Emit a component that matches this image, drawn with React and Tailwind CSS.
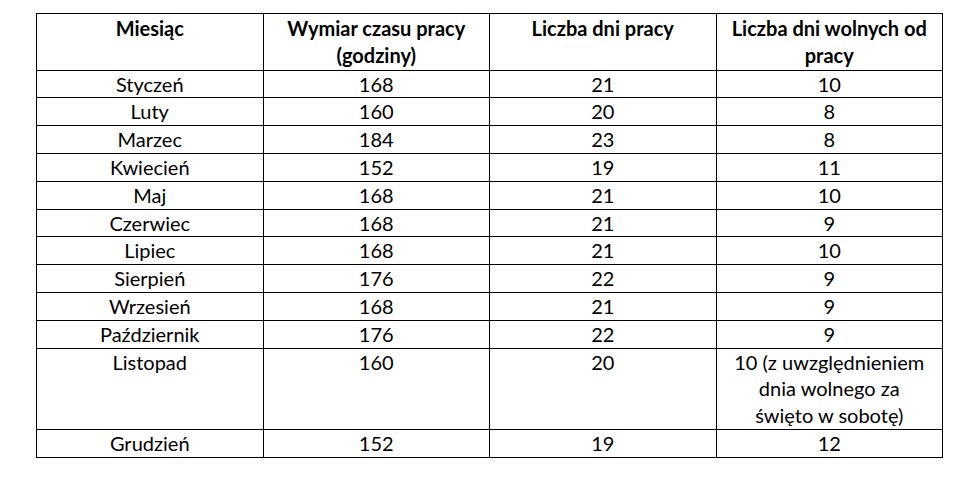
const rows = [
  ['Styczeń', '168', '21', '10'],
  ['Luty', '160', '20', '8'],
  ['Marzec', '184', '23', '8'],
  ['Kwiecień', '152', '19', '11'],
  ['Maj', '168', '21', '10'],
  ['Czerwiec', '168', '21', '9'],
  ['Lipiec', '168', '21', '10'],
  ['Sierpień', '176', '22', '9'],
  ['Wrzesień', '168', '21', '9'],
  ['Październik', '176', '22', '9'],
  [
    'Listopad',
    '160',
    '20',
    <>
      10 (z uwzględnieniem
      <br />
      dnia wolnego za
      <br />
      święto w sobotę)
    </>,
  ],
  ['Grudzień', '152', '19', '12'],
]

const cell = 'border border-black px-1 align-top text-center leading-[26.8px]'

export default function App() {
  return (
    <div className="min-h-screen bg-white pl-[36px] pt-[13px] text-black font-['Lato',sans-serif] text-[20px]">
      <table className="w-[907px] table-fixed border-collapse">
        <thead>
          <tr>
            <th className={cell + ' font-bold pt-[1px] pb-[1px]'}>Miesiąc</th>
            <th className={cell + ' font-bold pt-[1px] pb-[1px]'}>
              Wymiar czasu pracy
              <br />
              (godziny)
            </th>
            <th className={cell + ' font-bold pt-[1px] pb-[1px]'}>Liczba dni pracy</th>
            <th className={cell + ' font-bold pt-[1px] pb-[1px]'}>
              Liczba dni wolnych od
              <br />
              pracy
            </th>
          </tr>
        </thead>
        <tbody>
          {rows.map(r => (
            <tr key={r[0]}>
              {r.map((v, i) => (
                <td key={i} className={cell}>
                  {v}
                </td>
              ))}
            </tr>
          ))}
        </tbody>
      </table>
    </div>
  )
}
